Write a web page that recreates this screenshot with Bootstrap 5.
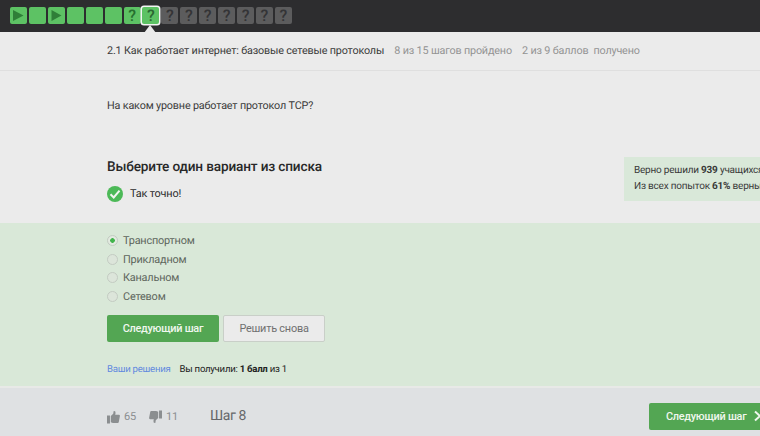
<!DOCTYPE html>
<html lang="ru">
<head>
<meta charset="utf-8">
<meta name="viewport" content="width=device-width, initial-scale=1">
<title>Как работает интернет</title>
<link href="https://cdn.jsdelivr.net/npm/bootstrap@5.3.0/dist/css/bootstrap.min.css" rel="stylesheet">
<style>
body{font-family:Roboto,"Liberation Sans",sans-serif;background:#ebebeb;color:#3a3a3a;font-size:11px;line-height:16px;width:760px;height:436px;overflow:hidden;text-rendering:geometricPrecision;letter-spacing:-.17px}
.steps{height:32px;background:#2d2d2f;padding:7px 0 0 10px;gap:1.93px}
.step{width:17px;height:17px;border-radius:2px;background:#5dc264;color:#27702f;font-size:16px;line-height:18px;font-weight:500;flex:none;letter-spacing:0}
.step.todo{background:#5c5c5d;color:#343436}
.step.now{position:relative;box-shadow:0 0 0 1.5px #f4f4f4;color:#2c6833}
.step.now::after{content:"";position:absolute;left:2px;top:18px;border:6.5px solid transparent;border-top:0;border-bottom:8px solid #ebebeb}
.lesson{height:39px;padding-left:107px;border-bottom:1px solid #dfdfdf;padding-bottom:1px;font-size:10.8px;gap:10.2px}
.muted{color:#939393}
.question{height:152px;padding-left:107px}
.prompt{padding-top:27px;font-size:10.8px}
.heading{font-size:13.6px;line-height:20px;font-weight:500;margin:43px 0 0;color:#282828;letter-spacing:-.15px}
.ok{margin-top:8px;font-size:10.9px;gap:7px;color:#2c2c2c}
.ok span{padding-top:1px}
.stats{width:160px;height:44px;margin-top:86px;margin-right:-24px;padding:6px 10px;background:#d9e8d9;font-size:10px;letter-spacing:-.22px}
.answers{height:163px;background:#d9e8d8;padding:8px 0 0 107px}
.choice{height:18.7px;font-size:10.9px;color:#5d655c;gap:5px;letter-spacing:-.2px}
.choice span:last-child{padding-top:1px}
.dot{width:11px;height:11px;border:1px solid #c3cbc2;border-radius:50%;background:#dce5da}
.dot.on{background:radial-gradient(circle,#42b44c 0 2px,#e2eae0 2.6px)}
.cta{height:27px;border-radius:2px;border:0;background:#53a653;color:#f0f7ee;font-size:10.9px;line-height:27px;padding:0;font-weight:500;letter-spacing:-.28px}
.cta:not(.forward){width:112px}
.again{height:27px;width:102px;border:1px solid #c9cfc8;border-radius:2px;background:#ebebeb;color:#707070;font-size:10.9px;line-height:25px;padding:0;letter-spacing:-.22px}
.actions{padding-top:9px}
.result{margin-top:20px;font-size:9.6px;gap:9px;color:#222;letter-spacing:-.25px}
.result a{color:#6188df;text-decoration:none}
.bottom{height:50px;background:#dfe1e3;border-top:2px solid #e8e9e7;padding-left:107px;color:#8b8e90}
.votes{width:103px;padding-top:9px;gap:4px;font-size:11px;letter-spacing:-.2px}
.down{margin-left:9px}
.stage{font-size:14px;color:#65676a;padding-top:8px;letter-spacing:-.4px}
.forward{width:124px;margin-left:auto;margin-right:-13px;padding-left:17px;margin-top:8px}
</style>
</head>
<body>
<svg class="d-none"><symbol id="thumb" viewBox="0 0 14 14"><path d="M0 5.5h3.2V14H0zM4.1 6L6.7 3.5 7.2.5Q9.6.2 9.2 3L8.8 4.7h4.1Q14 4.8 13.9 6l-1.2 6.5q-.2.9-1.2.9H6.3L4.1 12.6z" fill="currentColor"/></symbol></svg>
<nav class="steps d-flex">
<span class="step d-flex"><svg width="17" height="17"><path d="M3 3 13.5 8.5 3 14z" fill="#2f7f38"/></svg></span>
<span class="step"></span>
<span class="step d-flex"><svg width="17" height="17"><path d="M3.5 3 13.5 8.5 3.5 14z" fill="#2f7f38"/></svg></span>
<span class="step"></span><span class="step"></span><span class="step"></span>
<span class="step text-center">?</span><span class="step now text-center">?</span>
<span class="step todo text-center">?</span><span class="step todo text-center">?</span><span class="step todo text-center">?</span><span class="step todo text-center">?</span><span class="step todo text-center">?</span><span class="step todo text-center">?</span><span class="step todo text-center">?</span>
</nav>
<header class="lesson d-flex align-items-center">
<span class="lesson-name">2.1 Как работает интернет: базовые сетевые протоколы</span>
<span class="muted done">8 из 15 шагов пройдено</span><span class="muted points">2 из 9 баллов&nbsp; получено</span>
</header>
<main>
<section class="question d-flex justify-content-between">
<div><div class="prompt">На каком уровне работает протокол TCP?</div>
<h2 class="heading">Выберите один вариант из списка</h2>
<div class="ok d-flex align-items-center"><svg width="16" height="16"><circle cx="8" cy="8" r="8" fill="#4cb957"/><path d="M3.5 8.3 6.7 11.5 12.5 4.7" fill="none" stroke="#f2f5ef" stroke-width="2"/></svg><span>Так точно!</span></div></div>
<aside class="stats text-nowrap">Верно решили <b>939</b> учащихся<br>Из всех попыток <b>61%</b> верны</aside>
</section>
<section class="answers">
<div class="choice d-flex align-items-center"><span class="dot on"></span><span>Транспортном</span></div>
<div class="choice d-flex align-items-center"><span class="dot"></span><span>Прикладном</span></div>
<div class="choice d-flex align-items-center"><span class="dot"></span><span>Канальном</span></div>
<div class="choice d-flex align-items-center"><span class="dot"></span><span>Сетевом</span></div>
<div class="actions d-flex gap-1"><button class="btn cta">Следующий шаг</button><button class="btn again">Решить снова</button></div>
<div class="result d-flex"><a href="#">Ваши решения</a><span>Вы получили: <b>1 балл</b> из 1</span></div>
</section>
</main>
<footer class="bottom d-flex align-items-center">
<div class="votes d-flex align-items-center"><svg width="13" height="14"><use href="#thumb" width="13" height="14"/></svg><span>65</span><svg width="13" height="14" class="down"><use href="#thumb" width="13" height="14" transform="rotate(180 6.5 7)"/></svg><span>11</span></div>
<span class="stage">Шаг 8</span>
<button class="btn cta forward d-flex align-items-center">Следующий шаг<svg class="ms-2" width="8" height="12"><path d="M1 1.5 6 6 1 10.5" fill="none" stroke="#f0f7ee" stroke-width="2"/></svg></button>
</footer>
<script src="https://cdn.jsdelivr.net/npm/bootstrap@5.3.0/dist/js/bootstrap.bundle.min.js"></script>
</body>
</html>
